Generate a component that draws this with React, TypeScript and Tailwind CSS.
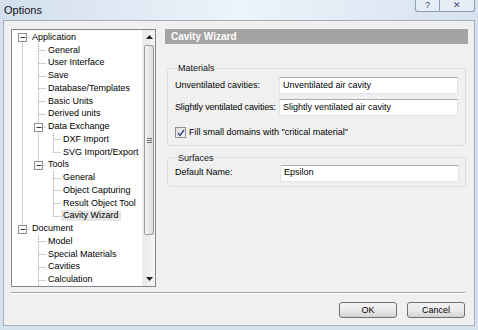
import React from "react";

type TreeItem = { label: string; level: 0 | 1 | 2; open?: boolean; selected?: boolean };

const items: TreeItem[] = [
  { label: "Application", level: 0, open: true },
  { label: "General", level: 1 },
  { label: "User Interface", level: 1 },
  { label: "Save", level: 1 },
  { label: "Database/Templates", level: 1 },
  { label: "Basic Units", level: 1 },
  { label: "Derived units", level: 1 },
  { label: "Data Exchange", level: 1, open: true },
  { label: "DXF Import", level: 2 },
  { label: "SVG Import/Export", level: 2 },
  { label: "Tools", level: 1, open: true },
  { label: "General", level: 2 },
  { label: "Object Capturing", level: 2 },
  { label: "Result Object Tool", level: 2 },
  { label: "Cavity Wizard", level: 2, selected: true },
  { label: "Document", level: 0, open: true },
  { label: "Model", level: 1 },
  { label: "Special Materials", level: 1 },
  { label: "Cavities", level: 1 },
  { label: "Calculation", level: 1 },
];

const ROW = 12.75;
const TOP = 1;
const COLS = [10.5, 26.5, 41.5];
const indent = ["pl-[20px]", "pl-[36px]", "pl-[51px]"];

const mid = (i: number) => Math.round(TOP + i * ROW + ROW / 2) + 0.5;

function TreeLines() {
  const lines: React.ReactNode[] = [];
  const boxes: React.ReactNode[] = [];
  items.forEach((it, i) => {
    const x = COLS[it.level];
    const cy = mid(i);
    lines.push(<line key={"h" + i} x1={x} y1={cy} x2={x + 7} y2={cy} />);
    let j = i - 1;
    while (j >= 0 && items[j].level > it.level) j--;
    let y0 = cy;
    if (j >= 0 && items[j].level === it.level) y0 = mid(j);
    else if (j >= 0) y0 = Math.round(TOP + i * ROW);
    if (y0 !== cy) lines.push(<line key={"v" + i} x1={x} y1={y0} x2={x} y2={cy} />);
    if (it.open) {
      boxes.push(
        <g key={"b" + i}>
          <rect x={x - 4} y={cy - 4} width={8} height={8} fill="#fff" stroke="#8f8f8f" />
          <line x1={x - 2} y1={cy} x2={x + 3} y2={cy} stroke="#333" />
        </g>
      );
    }
  });
  const last = items.length - 1;
  lines.push(<line key="tail" x1={COLS[1]} y1={mid(last)} x2={COLS[1]} y2={270} />);
  return (
    <svg className="absolute left-0 top-0" width={131} height={256}>
      <g stroke="#a3a3a3" strokeDasharray="1 1">{lines}</g>
      {boxes}
    </svg>
  );
}

function ScrollBar() {
  return (
    <div className="w-[13px] h-full flex flex-col bg-linear-to-r from-[#e9e9e9] to-[#f5f5f5] border-l border-[#f0f0f0]">
      <div className="h-[14px] flex items-center justify-center">
        <svg width="7" height="4"><path d="M0 4 L3.5 0 L7 4 Z" fill="#222" /></svg>
      </div>
      <div className="mt-[1px] h-[190px] mx-[1px] rounded-[2px] border border-[#9b9b9b] bg-linear-to-r from-[#f4f4f4] to-[#dcdcdc] flex items-center justify-center">
        <div className="flex flex-col gap-[1px]">
          <div className="w-[5px] h-[1px] bg-[#6f6f6f]" />
          <div className="w-[5px] h-[1px] bg-[#6f6f6f]" />
          <div className="w-[5px] h-[1px] bg-[#6f6f6f]" />
        </div>
      </div>
      <div className="flex-1" />
      <div className="h-[14px] flex items-center justify-center">
        <svg width="7" height="4"><path d="M0 0 L3.5 4 L7 0 Z" fill="#222" /></svg>
      </div>
    </div>
  );
}

function TextBox({ value }: { value: string }) {
  return (
    <div className="w-[179px] h-[17px] bg-white border border-[#dfe4ea] border-t-[#abadb3] flex items-center pl-[3px] text-black whitespace-nowrap">
      {value}
    </div>
  );
}

function Button({ label }: { label: string }) {
  return (
    <button className="w-[58px] h-[16px] rounded-[3px] border border-[#707070] bg-linear-to-b from-[#f2f2f2] via-[#ebebeb] to-[#d3d3d3] text-[9px] text-black leading-none">
      {label}
    </button>
  );
}

export default function App() {
  return (
    <div
      className="w-[478px] h-[330px] overflow-hidden bg-[#d5e1ef] flex flex-col text-[9px] text-black"
      style={{ fontFamily: '"Liberation Sans", Arial, sans-serif' }}
    >
      <div className="h-[20px] flex bg-linear-to-r from-[#d3dfee] via-[#edf3fa] to-[#d6e2f0]">
        <div className="pl-[4px] pt-[2px] text-[11px] text-[#111]">Options</div>
        <div className="ml-auto mr-[3px] h-[12px] flex border border-t-0 border-[#8c9db6] rounded-b-[3px] bg-[#e6edf6] text-[#3b4a62]">
          <div className="w-[23px] flex items-center justify-center text-[9px] leading-none">?</div>
          <div className="w-[35px] flex items-center justify-center border-l border-[#8c9db6] text-[9px] leading-none">✕</div>
        </div>
      </div>

      <div className="mx-[3px] h-[306px] border border-[#a3adbb] bg-[#f0f0f0] flex flex-col">
        <div className="flex h-[258px] mt-[8px] ml-[7px] mr-[6px] gap-[9px]">
          <div className="w-[146px] h-full border border-[#828790] bg-white flex">
            <div className="relative flex-1 pt-[1px] overflow-hidden">
              <TreeLines />
              {items.map((it, i) => (
                <div key={i} className={`relative h-[12.75px] flex items-center whitespace-nowrap ${indent[it.level]}`}>
                  <span className={`-ml-[2px] px-[2px] leading-[11px] ${it.selected ? "bg-[#e7e7e7]" : ""}`}>{it.label}</span>
                </div>
              ))}
            </div>
            <ScrollBar />
          </div>

          <div className="flex-1 flex flex-col">
            <div className="h-[15px] bg-[#a4a4a4] text-white font-bold text-[10px] flex items-center pl-[6px]">
              Cavity Wizard
            </div>

            <fieldset className="mt-[19px] mx-[2px] border border-[#d5dfe5] rounded-[3px] pl-[7px] pr-[7px] pb-[5px]">
              <legend className="ml-[2px] px-[1px] leading-[10px] text-[#111]">Materials</legend>
              <div className="mt-[4px] flex items-center">
                <div className="w-[104px] whitespace-nowrap">Unventilated cavities:</div>
                <TextBox value="Unventilated air cavity" />
              </div>
              <div className="mt-[5px] flex items-center">
                <div className="w-[104px] whitespace-nowrap tracking-[-0.15px]">Slightly ventilated cavities:</div>
                <TextBox value="Slightly ventilated air cavity" />
              </div>
              <div className="mt-[10px] flex items-center">
                <div className="w-[11px] h-[11px] border border-[#8e8f8f] bg-linear-to-br from-[#dcdcdc] to-[#fafafa] flex items-center justify-center">
                  <svg width="8" height="8" viewBox="0 0 8 8">
                    <path d="M1 4 L3 6.5 L7 1" fill="none" stroke="#3a4f8c" strokeWidth="1.5" />
                  </svg>
                </div>
                <span className="ml-[3px] whitespace-nowrap">Fill small domains with "critical material"</span>
              </div>
            </fieldset>

            <fieldset className="mt-[7px] mx-[2px] border border-[#d5dfe5] rounded-[3px] pl-[7px] pr-[5px] pb-[4px]">
              <legend className="ml-[2px] px-[1px] leading-[10px] text-[#111]">Surfaces</legend>
              <div className="mt-[2px] flex items-center">
                <div className="w-[105px] whitespace-nowrap">Default Name:</div>
                <TextBox value="Epsilon" />
              </div>
            </fieldset>
          </div>
        </div>

        <div className="mt-[5px] ml-[7px] mr-[9px] h-[2px] border-t border-[#a0a0a0] border-b border-b-white" />

        <div className="mt-[8px] mr-[9px] flex justify-end gap-[10px]">
          <Button label="OK" />
          <Button label="Cancel" />
        </div>
      </div>
    </div>
  );
}
